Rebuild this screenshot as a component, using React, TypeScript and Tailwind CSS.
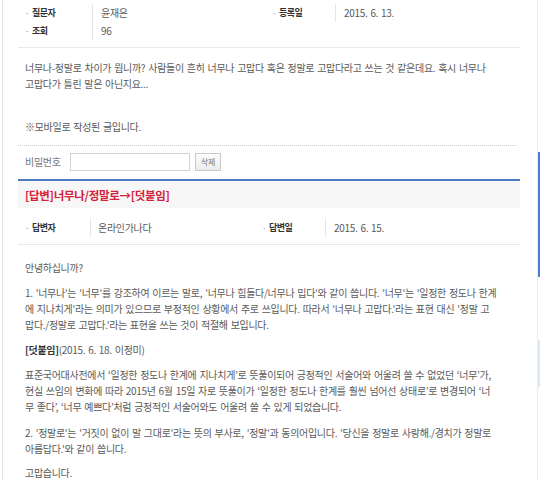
import React from "react";

const font = { fontFamily: '"Noto Sans CJK KR", "Noto Sans", sans-serif' };

function Label({ children }: { children: React.ReactNode }) {
  return (
    <span className="flex items-center text-[9px] font-bold tracking-[-0.5px] text-[#333] [word-spacing:0px]">
      <span className="mr-[3px] text-[8px] font-normal text-[#888]">·</span>
      {children}
    </span>
  );
}

export default function App() {
  return (
    <div className="flex h-[481px] w-[540px] overflow-hidden bg-white" style={font}>
      <div className="w-[2px] shrink-0" />
      <div className="flex w-[535px] shrink-0 border-l border-[#e4e4e4] pl-[15px]">
        <div className="w-[502px] text-[10px] leading-[16px] tracking-[-0.3px] [word-spacing:1px] text-[#5a5a5a]">
          {/* question info */}
          <div className="border-b border-[#e9e9e9] pt-[4px] pb-[7px]">
            <div className="grid grid-cols-[74px_175px_68px_185px]">
              <div className="flex h-[18px] items-center pl-[7px]"><Label>질문자</Label></div>
              <div className="flex h-[18px] items-center border-l border-[#e6e6e6] pl-[8px]">윤재은</div>
              <div className="flex h-[18px] items-center pl-[5px]"><Label>등록일</Label></div>
              <div className="flex h-[18px] items-center border-l border-[#e6e6e6] pl-[8px]">2015. 6. 13.</div>
              <div className="flex h-[18px] items-center pl-[7px]"><Label>조회</Label></div>
              <div className="flex h-[18px] items-center border-l border-[#e6e6e6] pl-[8px]">96</div>
              <div />
              <div />
            </div>
          </div>

          {/* question body */}
          <div className="border-b border-dotted border-[#cfcfcf] pl-[7px] pt-[12px] pb-[10px] mr-[3px]">
            <p className="whitespace-nowrap">
              너무나-정말로 차이가 뭡니까? 사람들이 흔히 너무나 고맙다 혹은 정말로 고맙다라고 쓰는 것 같은데요. 혹시 너무나
              <br />
              고맙다가 틀린 말은 아닌지요...
            </p>
            <p className="mt-[27px] whitespace-nowrap">※모바일로 작성된 글입니다.</p>
          </div>

          {/* password */}
          <div className="mt-[7px] flex items-center pl-[7px]">
            <span className="w-[45px] text-[#777]">비밀번호</span>
            <div className="h-[18px] w-[120px] border border-[#d0d0d0] bg-white" />
            <button className="ml-[5px] flex h-[18px] w-[26px] items-center justify-center border border-[#c9c9c9] bg-gradient-to-b from-[#fdfdfd] to-[#ececec] text-[8px] tracking-normal text-[#777]">
              삭제
            </button>
          </div>

          {/* answer title */}
          <div className="mt-[8px] border-t-2 border-[#4c7dc3] bg-[#f7f7f7]">
            <div className="flex h-[27px] items-center pl-[7px] text-[11.5px] font-bold tracking-[-0.3px] [word-spacing:0px] text-[#d5213c]">
              [답변]너무나/정말로→[덧붙임]
            </div>
          </div>

          {/* answer info */}
          <div className="border-b border-[#e9e9e9] pt-[10px] pb-[7px]">
            <div className="grid grid-cols-[72px_168px_67px_195px]">
              <div className="flex h-[19px] items-center pl-[7px]"><Label>답변자</Label></div>
              <div className="flex h-[19px] items-center border-l border-[#e6e6e6] pl-[7px]">온라인가나다</div>
              <div className="flex h-[19px] items-center pl-[4px]"><Label>답변일</Label></div>
              <div className="flex h-[19px] items-center border-l border-[#e6e6e6] pl-[8px]">2015. 6. 15.</div>
            </div>
          </div>

          {/* answer body */}
          <div className="pl-[7px] pt-[15px] whitespace-nowrap">
            <p>안녕하십니까?</p>
            <p className="mt-[9px]">
              1. '너무나'는 '너무'를 강조하여 이르는 말로, '너무나 힘들다/너무나 밉다'와 같이 씁니다. '너무'는 '일정한 정도나 한계
              <br />
              에 지나치게'라는 의미가 있으므로 부정적인 상황에서 주로 쓰입니다. 따라서 '너무나 고맙다.'라는 표현 대신 '정말 고
              <br />
              맙다./정말로 고맙다.'라는 표현을 쓰는 것이 적절해 보입니다.
            </p>
            <p className="mt-[9px]">
              <b className="text-[#333]">[덧붙임]</b>(2015. 6. 18. 이정미)
            </p>
            <p className="mt-[9px]">
              표준국어대사전에서 ‘일정한 정도나 한계에 지나치게’로 뜻풀이되어 긍정적인 서술어와 어울려 쓸 수 없었던 ‘너무’가,
              <br />
              현실 쓰임의 변화에 따라 2015년 6월 15일 자로 뜻풀이가 ‘일정한 정도나 한계를 훨씬 넘어선 상태로’로 변경되어 ‘너
              <br />
              무 좋다’, ‘너무 예쁘다’처럼 긍정적인 서술어와도 어울려 쓸 수 있게 되었습니다.
            </p>
            <p className="mt-[10px]">
              2. '정말로'는 '거짓이 없이 말 그대로'라는 뜻의 부사로, '정말'과 동의어입니다. '당신을 정말로 사랑해./경치가 정말로
              <br />
              아름답다.'와 같이 씁니다.
            </p>
            <p className="mt-[8px]">고맙습니다.</p>
          </div>
        </div>
      </div>
      {/* right edge strip */}
      <div className="w-[3px] shrink-0 border-l border-[#ececec]">
        <div className="mt-[152px] h-[125px] bg-[#4a7fd2]" />
        <div className="mt-[63px] h-[47px] bg-[#dde8f6]" />
      </div>
    </div>
  );
}
